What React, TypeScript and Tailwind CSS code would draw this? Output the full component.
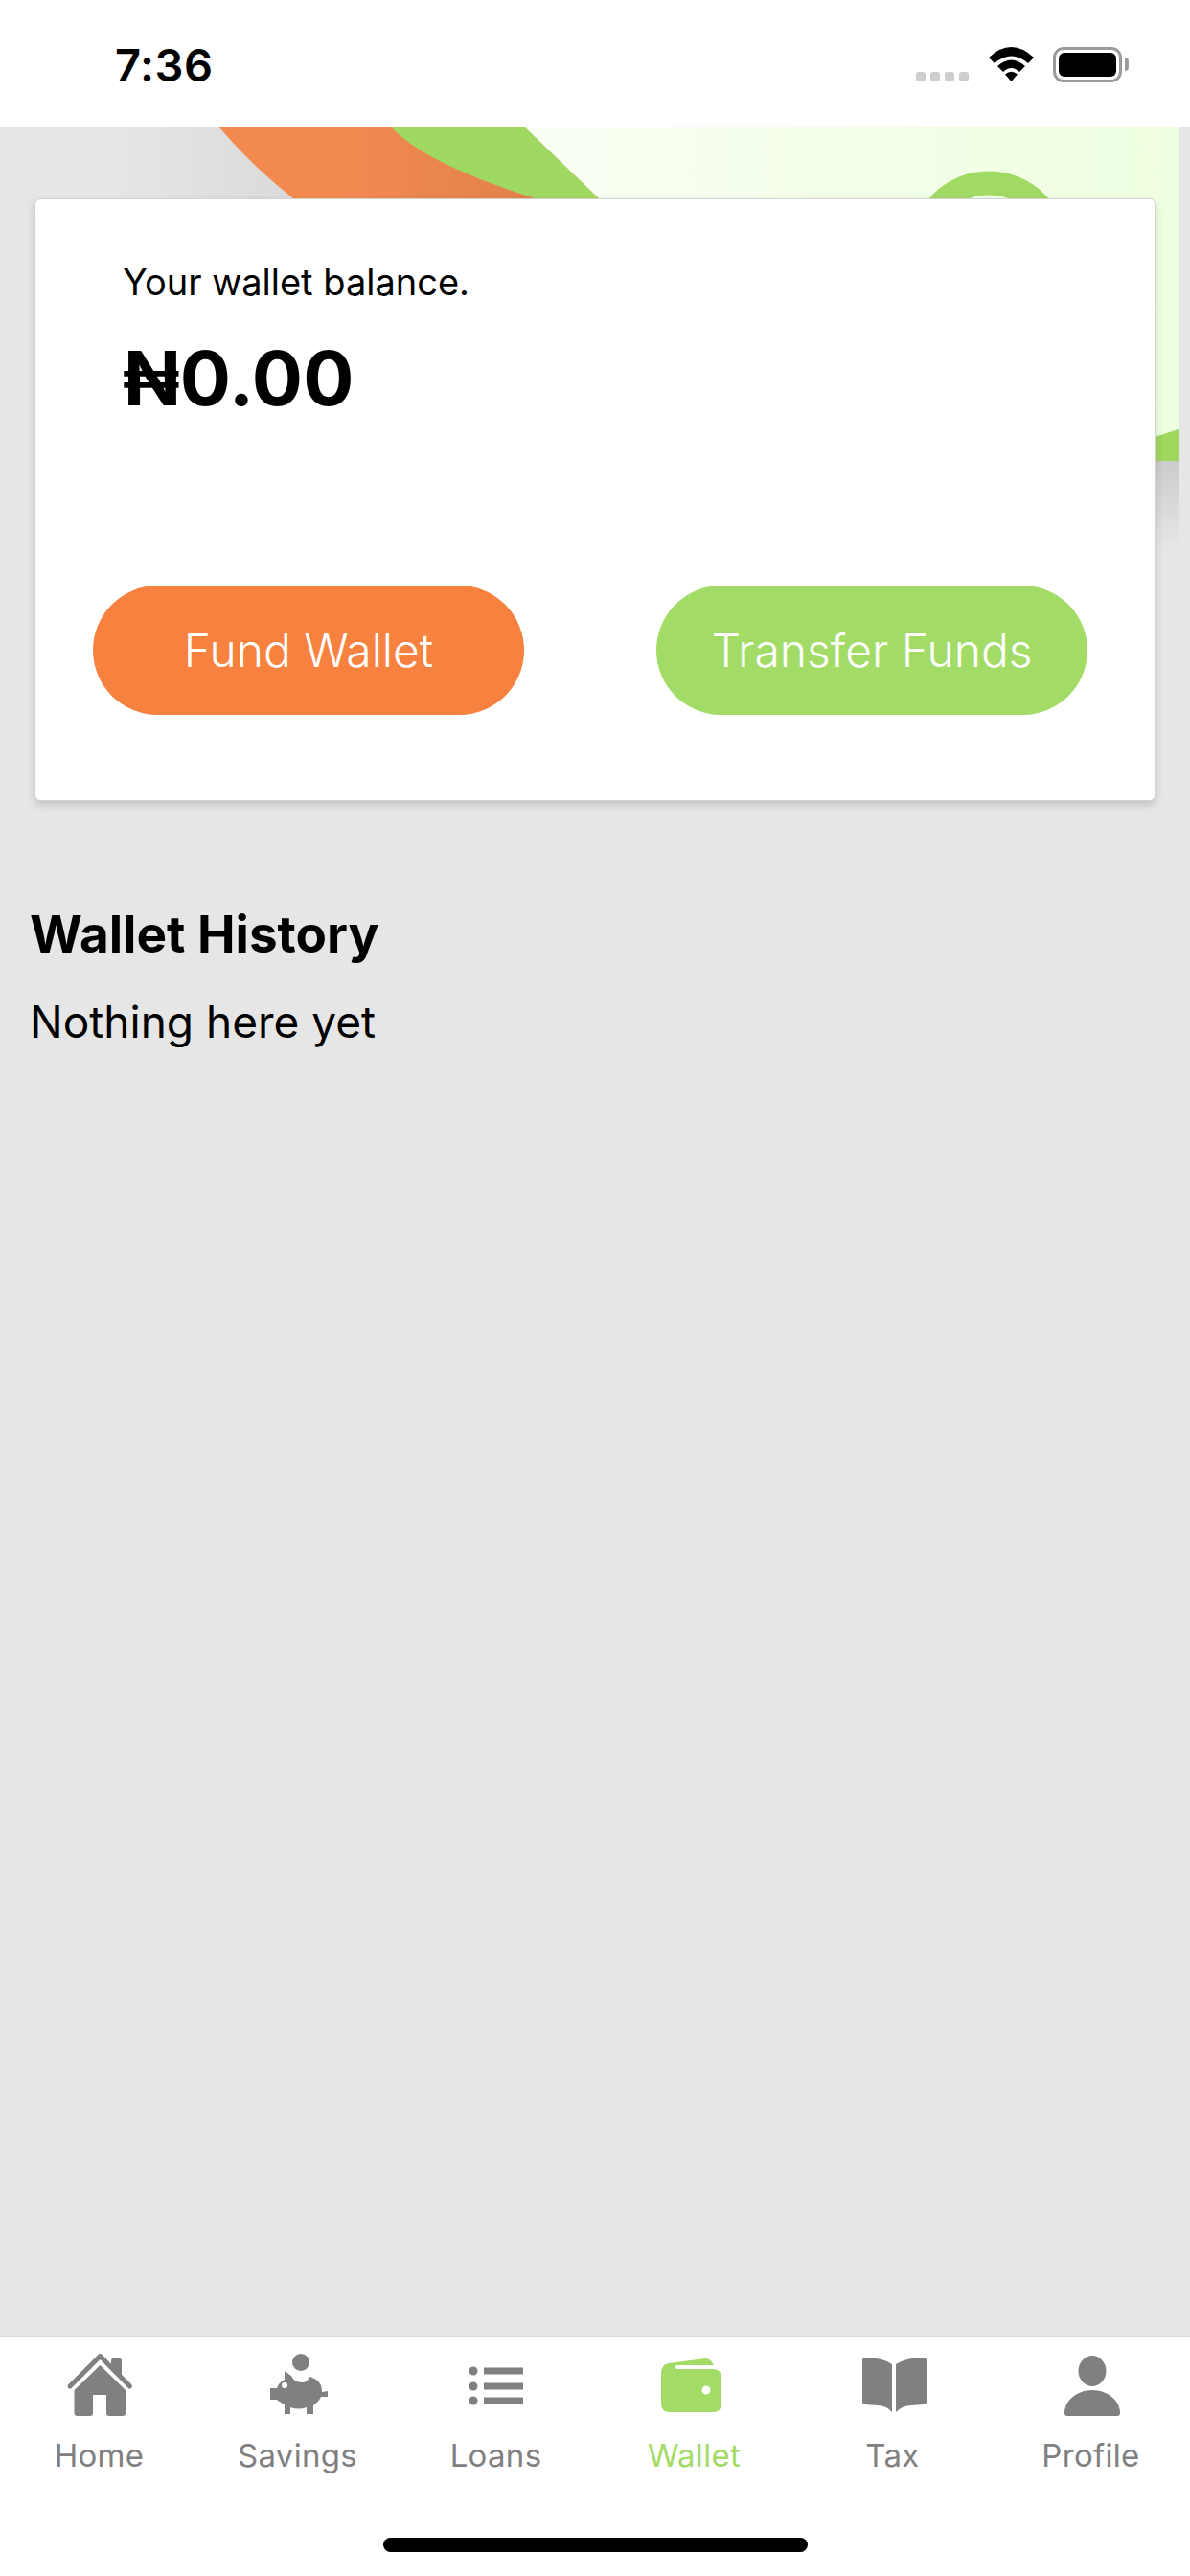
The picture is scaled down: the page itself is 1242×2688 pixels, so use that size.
/** Wallet screen: status bar, banner behind the balance card, history, bottom tabs. */

import type { ReactNode } from 'react'

function HomeIcon() {
  return (
    <>
      <path d="M9 37 L40.5 5.5 L71.5 37" fill="none" stroke="currentColor" strokeWidth="5" strokeLinecap="round" strokeLinejoin="round" />
      <path d="M52 10 Q52 8 54 8 L61 8 Q63 8 63 10 L63 29 L52 18 Z" fill="currentColor" />
      <path d="M40.5 15 L67 41 L67 65 Q67 68 64 68 L50 68 Q47 68 47 65 L47 46 L33 46 L33 65 Q33 68 30 68 L17 68 Q13.5 68 13.5 65 L13.5 41 Z" fill="currentColor" />
    </>
  )
}

function PiggyIcon() {
  return (
    <>
      <circle cx="43" cy="12" r="9" fill="currentColor" />
      <path d="M26 21 L33 26 Q36 33 44 33 Q50 33 52 27 Q65 30 65 43 L71 42 L71 48 L64 48 Q61 54 56 57 L56 66 L49 66 L49 59 Q41 62 32 59 L32 66 L26 66 L26 56 Q20 53 18 51 L11 51 L11 39 L18 39 Q20 33 26 30 Z" fill="currentColor" />
      <circle cx="26" cy="36" r="3" fill="#fff" />
    </>
  )
}

function ListIcon() {
  return (
    <>
      <ellipse cx="16" cy="21" rx="4.5" ry="4.5" fill="currentColor" />
      <ellipse cx="16" cy="37" rx="4.5" ry="4.5" fill="currentColor" />
      <ellipse cx="16" cy="52" rx="4.5" ry="4.5" fill="currentColor" />
      <rect x="27" y="17.5" width="41" height="7" fill="currentColor" />
      <rect x="27" y="33.5" width="41" height="7" fill="currentColor" />
      <rect x="27" y="48.5" width="41" height="7" fill="currentColor" />
    </>
  )
}

function WalletIcon() {
  return (
    <>
      <path d="M5 24 Q5 14 13 13 L51 8 Q57 8 60 15 L23 15 Q20 15 20 17 Q20 19 23 19 L59 19 Q68 19 68 28 L68 55 Q68 64 59 64 L14 64 Q5 64 5 55 Z" fill="currentColor" />
      <ellipse cx="52" cy="41" rx="4.5" ry="4.5" fill="#fff" />
    </>
  )
}

function BookIcon() {
  return (
    <>
      <path d="M11 7 Q29 7 39 14 L39 64 Q33 57 24 57 L11 56 Q8 56 8 53 L8 10 Q8 7 11 7 Z" fill="currentColor" />
      <path d="M72 7 Q54 7 43 14 L43 64 Q50 57 59 57 L72 56 Q75 56 75 53 L75 10 Q75 7 72 7 Z" fill="currentColor" />
    </>
  )
}

function PersonIcon() {
  return (
    <>
      <ellipse cx="41" cy="21" rx="14.5" ry="16" fill="currentColor" />
      <path d="M12 65 C12 52 25 41 41 41 C57 41 70 52 70 65 Q70 68 67 68 L15 68 Q12 68 12 65 Z" fill="currentColor" />
    </>
  )
}

function Tab({ label, active, children }: { label: string; active?: boolean; children: ReactNode }) {
  return (
    <div className={`flex-1 flex flex-col items-center pt-[14px] ${active ? 'text-[#a2dc66]' : 'text-[#808080]'}`}>
      <svg width="80" height="72" viewBox="0 0 80 72">{children}</svg>
      <span className="mt-[17px] text-[33px] leading-[40px] tracking-[0.3px]">{label}</span>
    </div>
  )
}

/** The stretched artwork that sits behind the balance card */
function Banner() {
  return (
    <svg className="absolute left-0 top-0" width="1230" height="440" viewBox="0 0 1230 440">
      <defs>
        <linearGradient id="pale" x1="0" y1="0" x2="1" y2="0">
          <stop offset="0" stopColor="#f9fff4" />
          <stop offset="1" stopColor="#eeffdf" />
        </linearGradient>
        <linearGradient id="shade" x1="0" y1="0" x2="0" y2="1">
          <stop offset="0" stopColor="#cbcbcb" />
          <stop offset="1" stopColor="#e6e6e6" />
        </linearGradient>
        <linearGradient id="leftShade" x1="0" y1="0" x2="1" y2="0">
          <stop offset="0" stopColor="#e6e6e6" />
          <stop offset="1" stopColor="#d4d4d4" />
        </linearGradient>
        <linearGradient id="orange" x1="0" y1="0" x2="1" y2="0">
          <stop offset="0.3" stopColor="#f28a50" />
          <stop offset="0.8" stopColor="#e0804a" />
        </linearGradient>
      </defs>
      <path d="M120 0 L228 0 Q262 40 306 75 L400 170 L120 170 Z" fill="url(#leftShade)" />
      <path d="M228 0 L560 0 L660 110 L340 110 L306 75 Q262 40 228 0 Z" fill="url(#orange)" />
      <path d="M408 0 L547 0 L625 75 L700 120 L640 110 L558 75 C480 50 430 25 408 0 Z" fill="#9fd962" />
      <path d="M547 0 L1230 0 L1230 320 L1140 350 L625 75 Z" fill="url(#pale)" />
      <circle cx="1032" cy="129" r="70" fill="none" stroke="#a0d964" strokeWidth="25" />
      <path d="M1140 345 L1230 316 L1230 350 L1140 350 Z" fill="#9fd75f" />
      <rect x="1140" y="349" width="90" height="91" fill="url(#shade)" />
    </svg>
  )
}

export default function App() {
  return (
    <div className="h-screen flex flex-col bg-[#e6e6e6] font-['Inter',sans-serif] text-black overflow-hidden">
      {/* Status bar */}
      <header className="relative z-10 h-[132px] shrink-0 bg-white flex items-start justify-between pl-[120px] pr-[64px] pt-[38px]">
        <span className="text-[47px] leading-[60px] font-semibold tracking-[0.5px]">7:36</span>
        <div className="flex items-start pt-[11px]">
          <div className="flex gap-[5px] mt-[26px]">
            <div className="w-[10px] h-[10px] rounded-[3px] bg-[#cdcdcd]" />
            <div className="w-[10px] h-[10px] rounded-[3px] bg-[#cdcdcd]" />
            <div className="w-[10px] h-[10px] rounded-[3px] bg-[#cdcdcd]" />
            <div className="w-[10px] h-[10px] rounded-[3px] bg-[#cdcdcd]" />
          </div>
          <svg className="ml-[21px]" width="47" height="37" viewBox="0 0 47 37">
            <path d="M0 11 Q23.5 -11 47 11 L41 17 Q23.5 2 6 17 Z" fill="#000" />
            <path d="M9 20 Q23.5 7 38 20 L32 26 Q23.5 18 15 26 Z" fill="#000" />
            <path d="M17 28.5 Q23.5 23 30 28.5 L23.5 36 Z" fill="#000" />
          </svg>
          <div className="ml-[20px] w-[72px] h-[37px] rounded-[11px] border-[3px] border-[#9b9b9b] p-[3px]">
            <div className="w-full h-full rounded-[6px] bg-black" />
          </div>
          <div className="ml-[3px] mt-[11px] w-[4px] h-[14px] rounded-r-[4px] bg-[#9b9b9b]" />
        </div>
      </header>

      <main className="relative flex-1">
        <Banner />

        {/* Balance card */}
        <section className="relative mt-[75px] mx-[36px] h-[629px] rounded-[6px] bg-white border border-[#d2d2d2] shadow-[0_4px_8px_rgba(0,0,0,0.16)] flex flex-col">
          <p className="mt-[63px] ml-[91px] text-[38px] leading-[46px]">Your wallet balance.</p>
          <p className="mt-[27px] ml-[91px] text-[79px] leading-[100px] font-bold">₦0.00</p>
          <div className="mt-auto mb-[89px] ml-[60px] mr-[70px] flex justify-between">
            <button className="w-[450px] h-[135px] rounded-full bg-[#f7813f] text-white text-[48px] font-light">Fund Wallet</button>
            <button className="w-[450px] h-[135px] rounded-full bg-[#a2dc66] text-white text-[48px] font-light">Transfer Funds</button>
          </div>
        </section>

        {/* History */}
        <section className="relative mt-[107px] ml-[31px]">
          <h2 className="text-[53px] leading-[64px] font-bold">Wallet History</h2>
          <p className="mt-[31px] text-[46px] leading-[56px]">Nothing here yet</p>
        </section>
      </main>

      {/* Bottom tabs */}
      <nav className="shrink-0 h-[250px] bg-white border-t border-[#d8d8d8] flex flex-col">
        <div className="flex">
          <Tab label="Home"><HomeIcon /></Tab>
          <Tab label="Savings"><PiggyIcon /></Tab>
          <Tab label="Loans"><ListIcon /></Tab>
          <Tab label="Wallet" active><WalletIcon /></Tab>
          <Tab label="Tax"><BookIcon /></Tab>
          <Tab label="Profile"><PersonIcon /></Tab>
        </div>
        <div className="mt-[66px] mx-auto w-[443px] h-[15px] rounded-full bg-black" />
      </nav>
    </div>
  )
}
